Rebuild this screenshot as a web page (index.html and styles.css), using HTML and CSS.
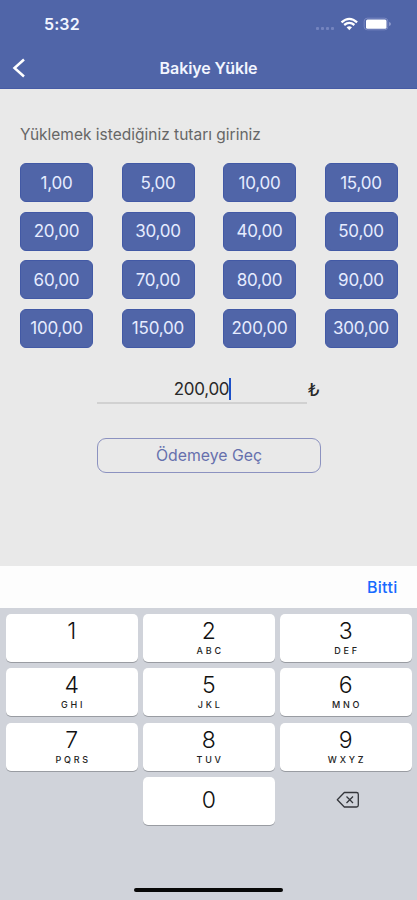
FILE: index.html
```html
<!DOCTYPE html>
<html lang="tr">
<head>
<meta charset="utf-8">
<meta name="viewport" content="width=device-width, initial-scale=1">
<title>Bakiye Yükle</title>
<link rel="stylesheet" href="styles.css">
</head>
<body>
<div class="screen">
  <header class="header">
    <div class="status">
      <span class="time">5:32</span>
      <svg class="status-icons" width="76" height="16" viewBox="0 0 76 16">
        <g fill="#7484bf"><rect x="1" y="11" width="3" height="3" rx="1"/><rect x="6" y="11" width="3" height="3" rx="1"/><rect x="11" y="11" width="3" height="3" rx="1"/><rect x="16" y="11" width="3" height="3" rx="1"/></g>
        <g fill="none" stroke="#fff" stroke-width="2.3"><path d="M26.500 6.300Q34.300 -.6 42.100 6.300"/><path d="M29.200 9Q34.300 4.700 39.400 9"/></g>
        <path fill="#fff" d="M31.600 11.200Q34.300 9.200 37 11.200L34.300 14.200Z"/>
        <rect x="49.200" y="2.200" width="23.600" height="11.600" rx="3" fill="none" stroke="#7887c1"/>
        <rect x="51" y="3.500" width="20.500" height="9.200" rx="1.500" fill="#fff"/>
        <path d="M74.300 6v4q1.400-.6 1.400-2t-1.400-2z" fill="#a6b0da"/>
      </svg>
    </div>
    <div class="nav">
      <svg class="back" width="14" height="20" viewBox="0 0 14 20"><path d="M12 1.500L2.500 10l9.500 8.500" fill="none" stroke="#fff" stroke-width="2.500"/></svg>
      <h1 class="title">Bakiye Yükle</h1>
    </div>
  </header>
  <main class="content">
    <p class="prompt">Yüklemek istediğiniz tutarı giriniz</p>
    <div class="amounts">
      <button class="amount">1,00</button><button class="amount">5,00</button><button class="amount">10,00</button><button class="amount">15,00</button>
      <button class="amount">20,00</button><button class="amount">30,00</button><button class="amount">40,00</button><button class="amount">50,00</button>
      <button class="amount">60,00</button><button class="amount">70,00</button><button class="amount">80,00</button><button class="amount">90,00</button>
      <button class="amount">100,00</button><button class="amount">150,00</button><button class="amount">200,00</button><button class="amount">300,00</button>
    </div>
    <div class="entry">
      <div class="field"><span>200,00</span><i class="caret"></i></div>
      <span class="currency">₺</span>
    </div>
    <button class="pay">Ödemeye Geç</button>
  </main>
  <section class="keyboard">
    <div class="toolbar"><span class="done">Bitti</span></div>
    <div class="keys">
      <div class="key"><b>1</b></div>
      <div class="key"><b>2</b><small>ABC</small></div>
      <div class="key"><b>3</b><small>DEF</small></div>
      <div class="key"><b>4</b><small>GHI</small></div>
      <div class="key"><b>5</b><small>JKL</small></div>
      <div class="key"><b>6</b><small>MNO</small></div>
      <div class="key"><b>7</b><small>PQRS</small></div>
      <div class="key"><b>8</b><small>TUV</small></div>
      <div class="key"><b>9</b><small>WXYZ</small></div>
      <div class="key zero"><b>0</b></div>
      <div class="erase">
        <svg width="24" height="18" viewBox="0 0 24 18" fill="none" stroke="#34363b" stroke-width="1.300" stroke-linejoin="round"><path d="M8.300 1.500H20.500Q22.300 1.500 22.300 3.300V14.200Q22.300 16 20.500 16H8.300L1.300 8.750Z"/><path d="M10.500 5.500l6.500 6.500M17 5.500l-6.500 6.500"/></svg>
      </div>
    </div>
    <div class="home"></div>
  </section>
</div>
</body>
</html>
```
FILE: styles.css
```css
* { box-sizing: border-box; }
body { margin: 0; font-family: Inter, "Liberation Sans", sans-serif; }
button { font: inherit; padding: 0; }
.screen { width: 417px; height: 900px; display: flex; flex-direction: column; background: #e9e9e9; overflow: hidden; }

.header { height: 89px; background: #5065a8; border-bottom: 1px solid #465ba5; color: #fff; }
.status { height: 46px; padding: 16px 26px 0 44px; display: flex; justify-content: space-between; }
.time { font-size: 16px; line-height: 17px; font-weight: 600; letter-spacing: .1px; color: #f2f5ff; }
.nav { height: 43px; display: grid; grid-template-columns: 40px 1fr 40px; align-items: center; }
.back { margin-left: 12px; }
.title { margin: 0; font-size: 16px; line-height: 20px; font-weight: 600; text-align: center; letter-spacing: -.1px; color: #f2f5ff; }

.content { height: 477px; padding: 36px 19.500px 0 20px; }
.prompt { margin: 0; font-size: 15.500px; line-height: 20px; color: #666; white-space: nowrap; }
.amounts { margin-top: 18px; display: grid; grid-template-columns: repeat(4, 73px); justify-content: space-between; row-gap: 9.670px; }
.amount { height: 39px; border: 1px solid #4259a5; border-radius: 6px; background: #5065a8; color: #e6ecff; font-size: 17px; letter-spacing: -.2px; white-space: nowrap; }
.entry { margin: 28.500px 0 0 77px; display: flex; height: 28px; }
.field { width: 210px; border-bottom: 2px solid #d1d1d1; display: flex; justify-content: center; align-items: center; font-size: 17px; letter-spacing: -.3px; color: #292929; }
.caret { width: 2px; height: 22px; margin-right: -1px; background: #1c50c8; }
.currency { margin-left: 1px; font-family: "DejaVu Sans", sans-serif; font-size: 18px; line-height: 27px; color: #292929; }
.pay { display: block; width: 224px; height: 35px; margin: 34px 0 0 77px; border: 1px solid #8c92c0; border-radius: 9px; background: transparent; color: #6670ad; font-size: 15.800px; line-height: 33px; }

.keyboard { height: 334px; background: #d0d3da; }
.toolbar { height: 42px; background: #fdfdfd; display: flex; align-items: center; justify-content: flex-end; padding-right: 19.500px; }
.done { color: #176aff; font-size: 16px; font-weight: 500; letter-spacing: .3px; }
.keys { padding: 5.500px 5.500px 0 6px; display: grid; grid-template-columns: repeat(3, 131.500px); grid-auto-rows: 48px; justify-content: space-between; row-gap: 6.500px; }
.key { border-radius: 5px; background: #fff; box-shadow: 0 1px 0 #999ca2; display: flex; flex-direction: column; align-items: center; padding-top: 5px; }
.key b { font-size: 23px; line-height: 25px; font-weight: 300; color: #111; }
.key small { margin-top: 1px; font-size: 9px; line-height: 11px; font-weight: 500; letter-spacing: 2.800px; margin-right: -2.800px; color: #222; }
.zero { grid-column: 2; padding-top: 11px; }
.erase { display: flex; align-items: center; justify-content: center; padding: 0 0 2px 4px; }
.home { width: 149px; height: 4px; margin: 62.500px auto 0; border-radius: 2px; background: #080808; }
```
